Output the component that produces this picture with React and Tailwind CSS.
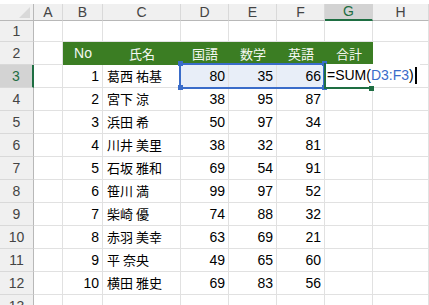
import React from 'react';

const cols = [
  { key: 'A', w: 'w-[29px]' },
  { key: 'B', w: 'w-[40px]' },
  { key: 'C', w: 'w-[78px]' },
  { key: 'D', w: 'w-[48px]' },
  { key: 'E', w: 'w-[48px]' },
  { key: 'F', w: 'w-[48px]' },
  { key: 'G', w: 'w-[48px]' },
  { key: 'H', w: 'flex-1' },
];

const students = [
  [1, '葛西 祐基', 80, 35, 66],
  [2, '宮下 涼', 38, 95, 87],
  [3, '浜田 希', 50, 97, 34],
  [4, '川井 美里', 38, 32, 81],
  [5, '石坂 雅和', 69, 54, 91],
  [6, '笹川 満', 99, 97, 52],
  [7, '柴崎 優', 74, 88, 32],
  [8, '赤羽 美幸', 63, 69, 21],
  [9, '平 奈央', 49, 65, 60],
  [10, '横田 雅史', 69, 83, 56],
];

const headings = ['No', '氏名', '国語', '数学', '英語', '合計'];

const numFont = "font-['Liberation_Sans',sans-serif]";
const jpFont = "font-['Noto_Sans_CJK_JP',sans-serif]";

const RowHead = ({ n, active, h }) => (
  <div
    className={`${h} w-[34px] shrink-0 flex items-center justify-center border-b border-b-[#d9d9d9] text-[14px] ${numFont} ${
      active
        ? 'bg-[#d3d3d3] text-[#1e6e42] border-r-2 border-r-[#1e6e42]'
        : 'bg-[#f0f0f0] text-[#444] border-r border-r-[#b8b8b8]'
    }`}
  >
    {n}
  </div>
);

const Cell = ({ w, className = '', children }) => (
  <div
    className={`${w} shrink-0 h-full flex items-center border-r border-b border-[#e1e1e1] overflow-hidden whitespace-nowrap ${className}`}
  >
    {children}
  </div>
);

const App = () => {
  return (
    <div className="relative w-[429px] h-[305px] overflow-hidden bg-white select-none">
      <div className="h-[4px] bg-white" />

      {/* column letters */}
      <div className="flex h-[17px]">
        <div className="w-[34px] shrink-0 bg-[#f0f0f0] border-r border-b border-[#b8b8b8] flex items-end justify-end pr-[3px] pb-[2px]">
          <svg width="11" height="11" viewBox="0 0 11 11">
            <polygon points="11,0 11,11 0,11" fill="#d9d9d9" />
          </svg>
        </div>
        {cols.map((c) => (
          <div
            key={c.key}
            className={`${c.w} shrink-0 flex items-center justify-center text-[14px] ${numFont} ${
              c.key === 'G'
                ? 'bg-[#d3d3d3] text-[#1e6e42] border-b-2 border-b-[#1e6e42] border-r border-r-[#d3d3d3]'
                : 'bg-[#f0f0f0] text-[#444] border-b border-b-[#b8b8b8] border-r border-r-[#d9d9d9]'
            }`}
          >
            {c.key}
          </div>
        ))}
      </div>

      {/* row 1 */}
      <div className="flex h-[21px]">
        <RowHead n={1} h="h-[21px]" />
        {cols.map((c) => (
          <Cell key={c.key} w={c.w} />
        ))}
      </div>

      {/* row 2: headings */}
      <div className="flex h-[23px]">
        <RowHead n={2} h="h-[23px]" />
        <Cell w="w-[29px]" />
        {headings.map((t, i) => (
          <div
            key={t}
            className={`${cols[i + 1].w} shrink-0 h-full flex items-center justify-center bg-[#3b7d23] text-[#f4f8f2] text-[13px] ${
              i === 0 ? numFont + ' text-[14px]' : jpFont
            }`}
          >
            {t}
          </div>
        ))}
        <Cell w="flex-1" />
      </div>

      {/* data rows */}
      {students.map((s, r) => (
        <div key={s[0]} className="flex h-[23px]">
          <RowHead n={r + 3} h="h-[23px]" active={r === 0} />
          <Cell w="w-[29px]" />
          <Cell w="w-[40px]" className={`justify-end pr-[3px] text-[14px] text-black ${numFont}`}>
            {s[0]}
          </Cell>
          <Cell w="w-[78px]" className={`pl-[4px] text-[13px] text-black ${jpFont}`}>
            {s[1]}
          </Cell>
          {[s[2], s[3], s[4]].map((v, i) => (
            <Cell
              key={i}
              w="w-[48px]"
              className={`justify-end pr-[3px] text-[14px] text-black ${numFont} ${
                r === 0 ? 'bg-[#e8eef8] border-[#d5dcea]' : ''
              }`}
            >
              {v}
            </Cell>
          ))}
          <Cell w="w-[48px]" />
          <Cell w="flex-1" />
        </div>
      ))}

      {/* row 13 */}
      <div className="flex h-[23px]">
        <RowHead n={13} h="h-[23px]" />
        {cols.map((c) => (
          <Cell key={c.key} w={c.w} />
        ))}
      </div>

      {/* reference range D3:F3 */}
      <div className="absolute left-[179px] top-[63px] w-[146px] h-[26px] border-2 border-[#3a6cc9]" />
      <div className="absolute left-[178px] top-[61px] w-[5px] h-[5px] bg-[#3a6cc9]" />
      <div className="absolute left-[178px] top-[85px] w-[5px] h-[5px] bg-[#3a6cc9]" />
      <div className="absolute left-[322px] top-[61px] w-[5px] h-[5px] bg-[#3a6cc9]" />
      <div className="absolute left-[322px] top-[85px] w-[5px] h-[5px] bg-[#3a6cc9]" />

      {/* active cell G3 in edit mode */}
      <div
        className={`absolute left-[326px] top-[64px] h-[23px] bg-white flex items-center pl-[1px] pr-[3px] text-[14px] text-black ${numFont}`}
      >
        <span>=SUM(</span>
        <span className="text-[#3a6cc9]">D3:F3</span>
        <span>)</span>
        <span className="ml-[1px] w-[2px] h-[17px] bg-black" />
      </div>
      <div className="absolute left-[324px] top-[63px] w-[2px] h-[26px] bg-[#1e6e42]" />
      <div className="absolute left-[324px] top-[87px] w-[48px] h-[2px] bg-[#1e6e42]" />
      <div className="absolute left-[369px] top-[86px] w-[5px] h-[5px] bg-[#1e6e42]" />
    </div>
  );
};

export default App;
